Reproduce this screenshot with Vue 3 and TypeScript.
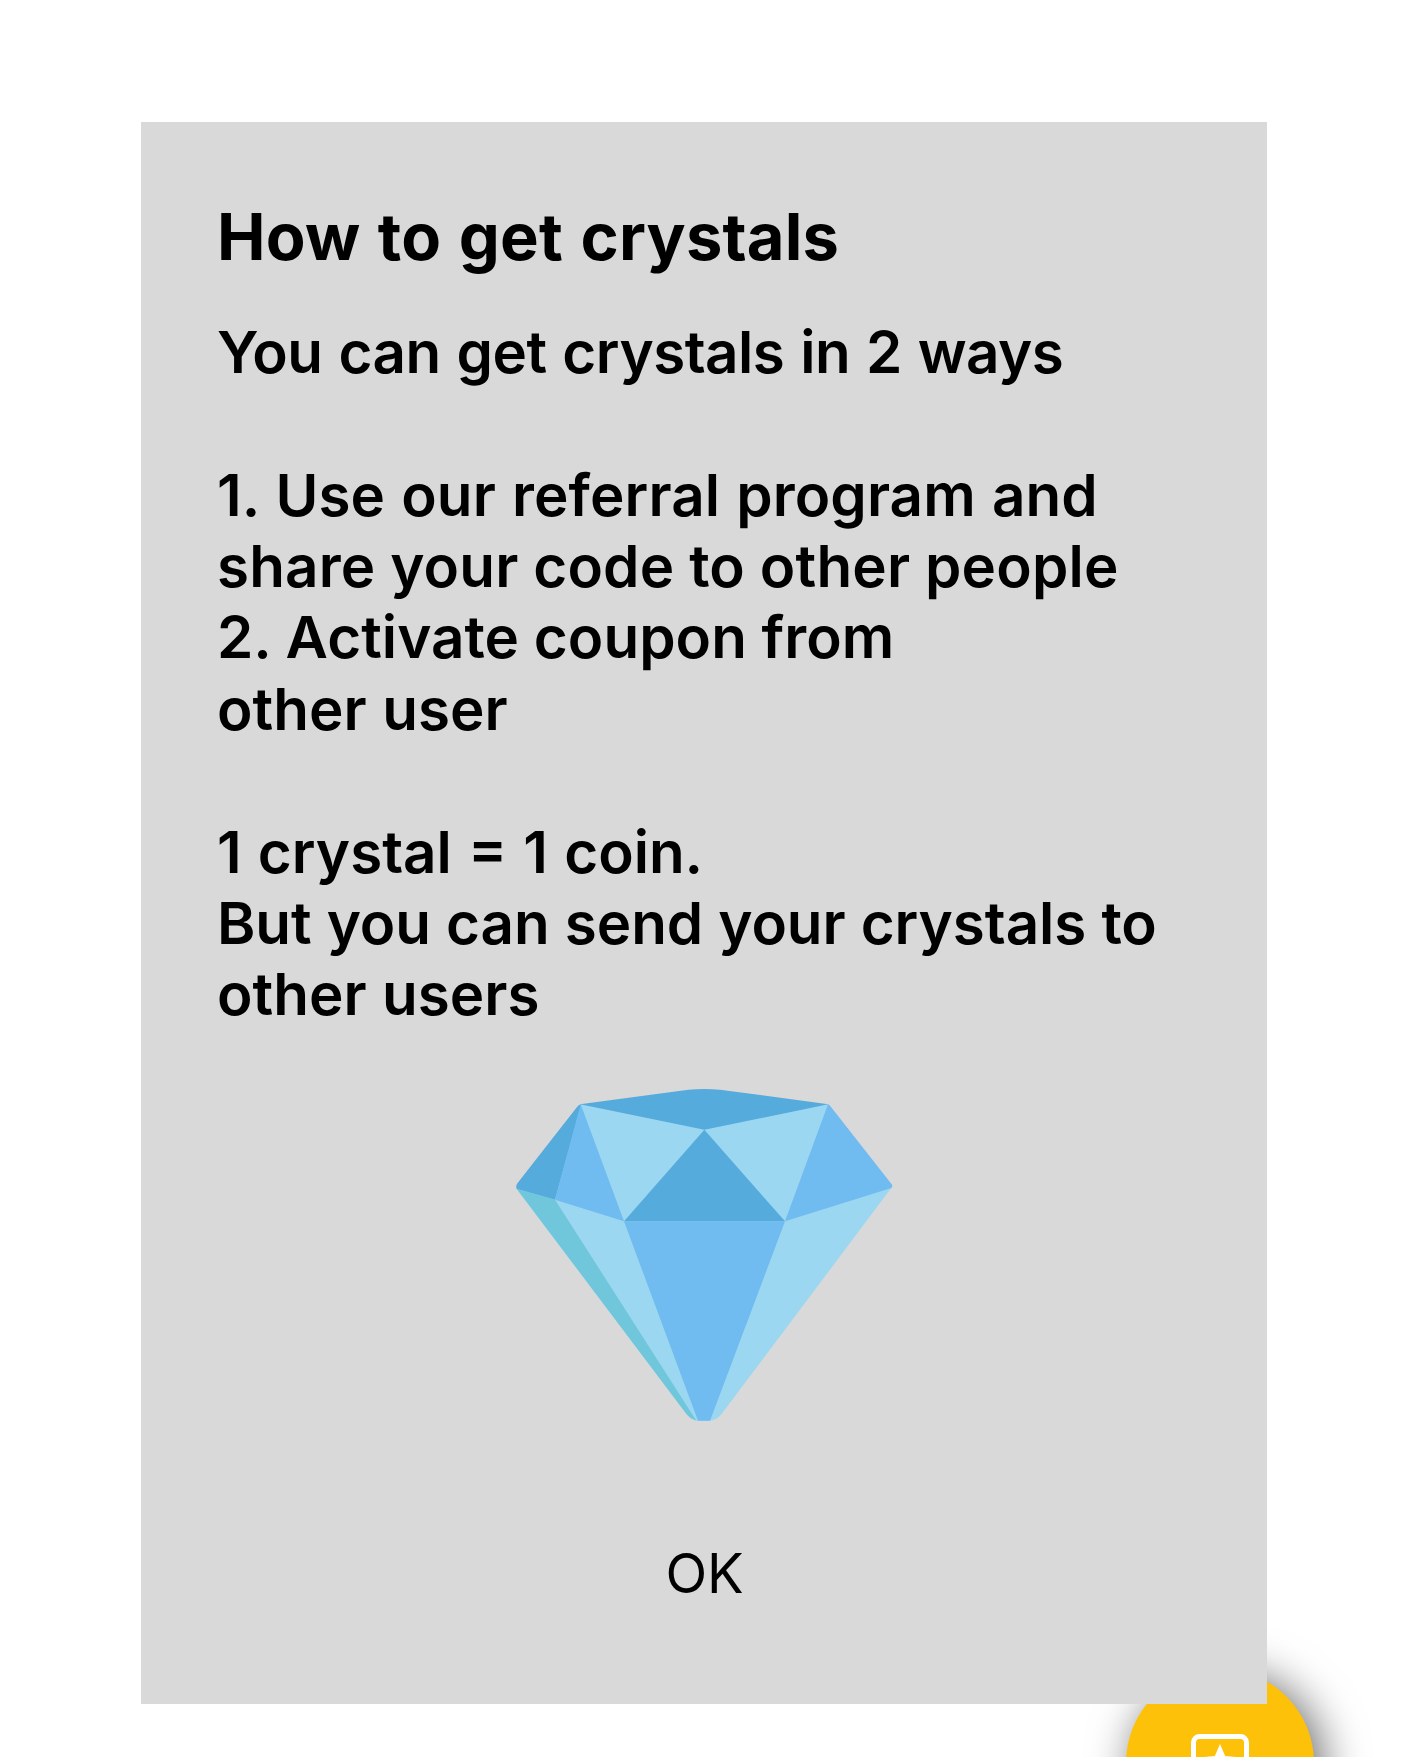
<script setup lang="ts">
interface Line {
  text: string
  tracking: number
  wordGap: number
}

const lines: Line[] = [
  { text: 'You can get crystals in 2 ways', tracking: -0.5, wordGap: 1.7 },
  { text: '', tracking: 0, wordGap: 0 },
  { text: '1. Use our referral program and', tracking: 0.12, wordGap: 1.3 },
  { text: 'share your code to other people', tracking: 0.17, wordGap: 0 },
  { text: '2. Activate coupon from', tracking: 0.06, wordGap: 0 },
  { text: 'other user', tracking: 0.05, wordGap: 0.8 },
  { text: '', tracking: 0, wordGap: 0 },
  { text: '1 crystal = 1 coin.', tracking: 0, wordGap: 1.5 },
  { text: 'But you can send your crystals to', tracking: -0.05, wordGap: 0.5 },
  { text: 'other users', tracking: 0.02, wordGap: 0.8 },
]
</script>

<template>
  <main class="screen">
    <button class="fab" aria-label="Rewards">
      <svg class="fab-icon" viewBox="0 0 58 58" aria-hidden="true">
        <rect x="2.5" y="2.5" width="53" height="53" rx="6" fill="none" stroke="#fff" stroke-width="5" />
        <path
          transform="translate(7.04 6.3) scale(1.83)"
          fill="#fff"
          d="M22 9.24l-7.19-.62L12 2 9.19 8.63 2 9.24l5.46 4.73L5.82 21 12 17.27 18.18 21l-1.63-7.03z"
        />
      </svg>
    </button>

    <section class="dialog">
      <h1 class="title">How to get crystals</h1>
      <div class="body">
        <p
          v-for="(line, i) in lines"
          :key="i"
          class="line"
          :class="{ blank: !line.text }"
          :style="{ letterSpacing: `${line.tracking}px`, wordSpacing: `${line.wordGap}px` }"
        >
          {{ line.text }}
        </p>
      </div>
      <svg class="gem" viewBox="48 58 1130 996" aria-hidden="true">
        <path fill="#9cd7f1" d="M240 104L985 104L1176 352L664 1034Q650 1052 630 1053H592Q572 1050 560 1034L50 358Z" />
        <path fill="#56abdd" d="M240 104L565 60Q613 56 660 60L985 104L613 180Z" />
        <path fill="#56abdd" d="M244 104Q237 104 231 112L51 342Q47 350 50 358L165 390Z" />
        <path fill="#70bbf0" d="M242 104L165 390L372 455Z" />
        <path fill="#70bbf0" d="M984 104Q989 106 993 112L1175 344Q1179 350 1174 355L855 455Z" />
        <path fill="#56abdd" d="M613 180L855 455H372Z" />
        <path fill="#70bbf0" d="M372 455H855L630 1053H594Z" />
        <path fill="#70c6da" d="M50 357L165 390L589 1053Q572 1048 560 1034Z" />
      </svg>
      <button class="ok">OK</button>
    </section>
  </main>
</template>

<style>
body {
  margin: 0;
  background: #fff;
  overflow: hidden;
}
</style>

<style scoped>
.screen {
  position: relative;
  box-sizing: border-box;
  width: 1406px;
  height: 1757px;
  padding: 122.4px 0 0 141.3px;
  overflow: hidden;
  background: #fff;
  font-family: Inter, 'Liberation Sans', sans-serif;
  color: #000;
}

.dialog {
  position: relative;
  box-sizing: border-box;
  display: flex;
  flex-direction: column;
  width: 1126px;
  height: 1581.6px;
  padding: 75px 0 0 75.7px;
  background: #d9d9d9;
}

.title {
  margin: 0 0 39.2px;
  font-size: 65px;
  font-weight: 700;
  line-height: 80px;
  letter-spacing: 0.2px;
  word-spacing: 1.9px;
  white-space: nowrap;
}

.body {
  font-size: 58.3px;
  font-weight: 600;
  line-height: 71.2px;
}

.line {
  height: 71.2px;
  margin: 0;
  white-space: nowrap;
}

.line.blank {
  height: 72.2px;
}

.gem {
  display: block;
  flex: none;
  width: 376.7px;
  height: 332px;
  margin: 58.7px 0 0 299px;
}

.ok {
  width: 200px;
  height: 66px;
  margin: 118.7px 0 0 387.6px;
  padding: 0;
  border: 0;
  background: none;
  font: 400 54.5px/66px Inter, 'Liberation Sans', sans-serif;
  color: #000;
  text-align: center;
}

.fab {
  position: absolute;
  top: 1668.5px;
  left: 1125.5px;
  width: 188.4px;
  height: 188.4px;
  padding: 0;
  border: 0;
  border-radius: 50%;
  background: #fec10a;
  box-shadow: 8px 5px 45px rgba(0, 0, 0, 0.6);
}

.fab-icon {
  position: absolute;
  top: 65.8px;
  left: 65.2px;
  width: 58px;
  height: 58px;
}
</style>
